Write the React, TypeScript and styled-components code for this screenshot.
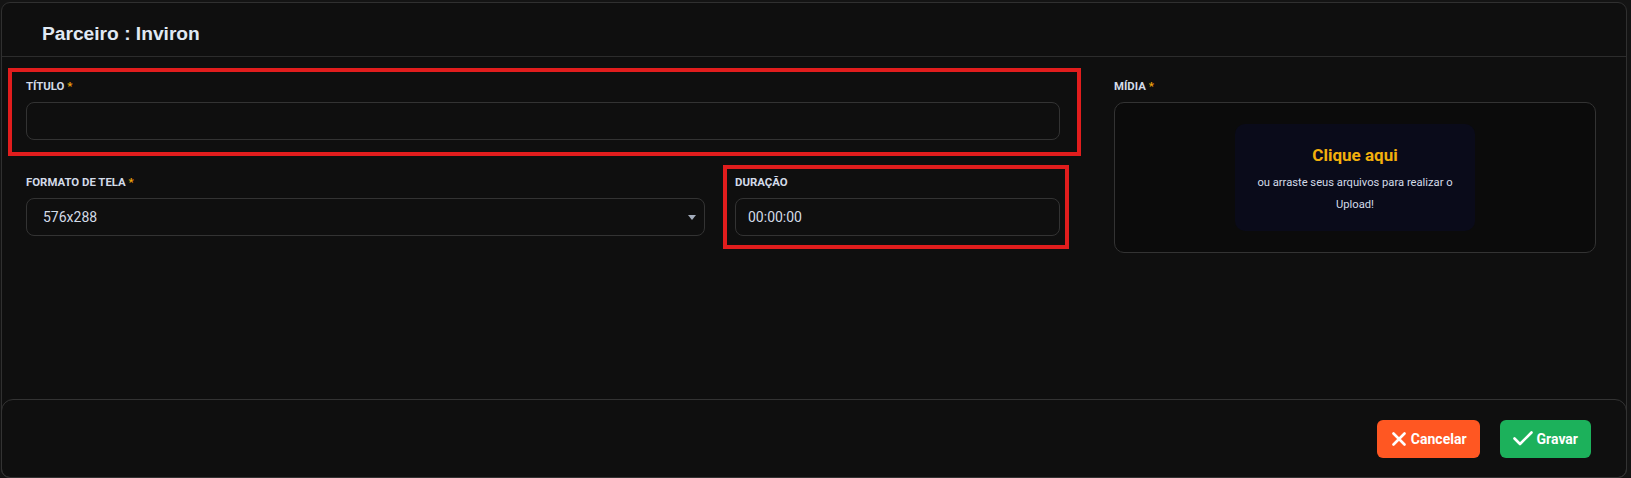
import React from "react";
import styled, { createGlobalStyle } from "styled-components";

const GlobalStyle = createGlobalStyle`
  * { box-sizing: border-box; }
  html, body { margin: 0; padding: 0; background: #141414; }
  body { font-family: Roboto, "Noto Sans", sans-serif; }
`;

const Page = styled.div`
  padding: 2px 0 0 1px;
  height: 478px;
  overflow: hidden;
`;

const Modal = styled.div`
  width: 1626px;
  height: 476px;
  background: #0f0f0f;
  border: 1px solid #303030;
  border-radius: 9px;
  display: flex;
  flex-direction: column;
`;

const Header = styled.div`
  padding: 20px 40px 11px;
  border-bottom: 1px solid #2c2c2c;
`;

const Title = styled.h1`
  margin: 0;
  font-family: "Liberation Sans", Arial, sans-serif;
  font-size: 19.2px;
  line-height: 22px;
  font-weight: 700;
  color: #e0e9f4;
`;

const Body = styled.div`
  padding: 21px 0 0 24px;
  display: grid;
  grid-template-columns: 1034px 482px;
  column-gap: 54px;
  align-items: start;
`;

const Column = styled.div`
  display: flex;
  flex-direction: column;
  gap: 34px;
`;

const Row = styled.div`
  display: grid;
  grid-template-columns: 679px 1fr;
  column-gap: 30px;
`;

type Mark = { t: number; r: number; b: number; l: number };

const Field = styled.div<{ $mark?: Mark }>`
  position: relative;
  display: flex;
  flex-direction: column;
  gap: 8px;
  ${({ $mark }) =>
    $mark
      ? `&::after {
          content: "";
          position: absolute;
          top: ${$mark.t}px;
          right: ${$mark.r}px;
          bottom: ${$mark.b}px;
          left: ${$mark.l}px;
          border: 4px solid #e11d1d;
          pointer-events: none;
        }`
      : ""}
`;

const Label = styled.label`
  font-size: 11.4px;
  line-height: 16px;
  font-weight: 700;
  text-transform: uppercase;
  color: #d3dbe8;
`;

const Required = styled.span`
  color: #f0a30a;
`;

const TextInput = styled.input`
  height: 38px;
  width: 100%;
  border: 1px solid #333333;
  border-radius: 8px;
  background: #0f0f0f;
  color: #d3dbe8;
  font-family: Roboto, sans-serif;
  font-size: 14px;
  padding: 0 12px;
  outline: none;
`;

const Select = styled.div`
  height: 38px;
  border: 1px solid #333333;
  border-radius: 8px;
  padding: 0 8px 0 16px;
  display: flex;
  align-items: center;
  justify-content: space-between;
  font-size: 14px;
  color: #d3dbe8;
`;

const Caret = styled.span`
  width: 0;
  height: 0;
  border-left: 4px solid transparent;
  border-right: 4px solid transparent;
  border-top: 5px solid #a3acbb;
  margin-top: 1px;
`;

const Dropzone = styled.div`
  height: 151px;
  border: 1px solid #333333;
  border-radius: 10px;
  background: #0b0b0b;
  display: flex;
  align-items: center;
  justify-content: center;
`;

const DropCard = styled.div`
  width: 240px;
  background: #0a0b1a;
  border-radius: 10px;
  padding: 19px 20px 15px;
  text-align: center;
`;

const DropTitle = styled.div`
  font-size: 17px;
  line-height: 24px;
  font-weight: 700;
  color: #f3b00c;
  margin-bottom: 5px;
`;

const DropText = styled.div`
  font-size: 11.2px;
  line-height: 22px;
  color: #d3dbe8;
`;

const Footer = styled.div`
  margin: auto -1px -1px;
  height: 79px;
  border: 1px solid #333333;
  border-radius: 12px 12px 9px 9px;
  display: flex;
  justify-content: flex-end;
  align-items: center;
  gap: 20px;
  padding-right: 35px;
`;

const Button = styled.button<{ $tone: "danger" | "success" }>`
  height: 38px;
  border: none;
  border-radius: 6px;
  background: ${({ $tone }) => ($tone === "danger" ? "#ff5722" : "#1cb15b")};
  color: #ffffff;
  font-family: Roboto, sans-serif;
  font-weight: 700;
  font-size: 14px;
  display: flex;
  align-items: center;
  gap: ${({ $tone }) => ($tone === "danger" ? "5px" : "4px")};
  padding: ${({ $tone }) => ($tone === "danger" ? "0 13px 0 15px" : "0 13px")};
  cursor: pointer;
`;

const XIcon = () => (
  <svg width="14" height="14" viewBox="0 0 14 14">
    <path d="M1.5 1.5 12.5 12.5M12.5 1.5 1.5 12.5" stroke="#fff" strokeWidth="2.6" strokeLinecap="round" fill="none" />
  </svg>
);

const CheckIcon = () => (
  <svg width="20" height="15" viewBox="0 0 20 15">
    <path d="M1.5 7.5 7 13 18.5 1.5" stroke="#fff" strokeWidth="2.6" strokeLinecap="round" strokeLinejoin="round" fill="none" />
  </svg>
);

export default function App() {
  return (
    <>
      <GlobalStyle />
      <Page>
        <Modal>
          <Header>
            <Title>Parceiro : Inviron</Title>
          </Header>
          <Body>
            <Column>
              <Field $mark={{ t: -10, r: -21, b: -16, l: -18 }}>
                <Label>
                  Título <Required>*</Required>
                </Label>
                <TextInput defaultValue="" />
              </Field>
              <Row>
                <Field>
                  <Label>
                    Formato de tela <Required>*</Required>
                  </Label>
                  <Select>
                    <span>576x288</span>
                    <Caret />
                  </Select>
                </Field>
                <Field $mark={{ t: -9, r: -9, b: -13, l: -12 }}>
                  <Label>Duração</Label>
                  <TextInput defaultValue="00:00:00" />
                </Field>
              </Row>
            </Column>
            <Field>
              <Label>
                Mídia <Required>*</Required>
              </Label>
              <Dropzone>
                <DropCard>
                  <DropTitle>Clique aqui</DropTitle>
                  <DropText>ou arraste seus arquivos para realizar o Upload!</DropText>
                </DropCard>
              </Dropzone>
            </Field>
          </Body>
          <Footer>
            <Button $tone="danger">
              <XIcon />
              Cancelar
            </Button>
            <Button $tone="success">
              <CheckIcon />
              Gravar
            </Button>
          </Footer>
        </Modal>
      </Page>
    </>
  );
}
